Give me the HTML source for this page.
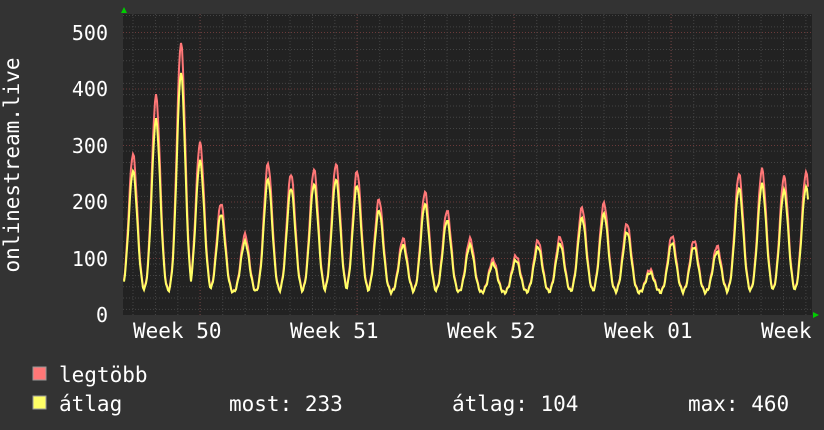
<!DOCTYPE html>
<html><head><style>
body{margin:0;background:#333;width:824px;height:430px;overflow:hidden;font-family:"DejaVu Sans Mono","Liberation Mono",monospace;color:#fff}
svg{position:absolute;left:0;top:0}
</style></head><body>
<svg id="s" width="824" height="430" xmlns="http://www.w3.org/2000/svg" font-family="DejaVu Sans Mono, Liberation Mono, monospace" fill="#fff">
<rect x="123" y="14" width="689" height="301" fill="#222"/>
<g id="grid"></g>
<path id="mx" fill="none" stroke="#f77" stroke-width="2"/>
<path id="av" fill="none" stroke="#ff6" stroke-width="2"/>
<g font-size="20" text-anchor="end">
<text x="108" y="40">500</text><text x="108" y="96">400</text><text x="108" y="153">300</text>
<text x="108" y="209">200</text><text x="108" y="266">100</text><text x="108" y="322">0</text>
</g>
<g font-size="21">
<text x="133" y="338">Week 50</text><text x="290" y="338">Week 51</text><text x="447" y="338">Week 52</text>
<text x="604" y="338">Week 01</text><text x="761" y="338">Week</text>
</g>
<text font-size="21" transform="translate(19,165) rotate(-90)" text-anchor="middle">onlinestream.live</text>
<polygon points="121,13 124,7 127,13" fill="#0c0"/>
<polygon points="813,312 819,315 813,318" fill="#0c0"/>
<rect x="33" y="367" width="13" height="13" fill="#f77" stroke="#999"/>
<rect x="33" y="396" width="13" height="13" fill="#ff6" stroke="#999"/>
<g font-size="21">
<text x="59" y="382">legtöbb</text>
<text x="59" y="411">átlag</text>
<text x="229" y="411">most: 233</text>
<text x="452" y="411">átlag: 104</text>
<text x="688" y="411">max: 460</text>
</g>
</svg>
<script>
var g=document.getElementById("grid"),h="";
for(var v=10;v<=540;v+=20){var y=315-v*0.565;if(y<14)break;h+='<line x1="123" x2="812" y1="'+y+'" y2="'+y+'" stroke="#444" stroke-dasharray="1,2"/>';}
for(var v=100;v<=500;v+=100){var y=315-v*0.565;h+='<line x1="123" x2="812" y1="'+y+'" y2="'+y+'" stroke="#6a3a3a" stroke-dasharray="1,2"/>';}
for(var x=133;x<812;x+=22.43){h+='<line y1="14" y2="315" x1="'+x+'" x2="'+x+'" stroke="#444" stroke-dasharray="1,2"/>';}
for(var x=133+67;x<812;x+=157){h+='<line y1="14" y2="315" x1="'+x+'" x2="'+x+'" stroke="#6a3a3a" stroke-dasharray="1,2"/>';}
g.innerHTML=h;
var pk=[[133,285],[156,388],[181,482],[200,305],[221,198],[245,142],[268,268],[291,250],[314,258],[336,268],[357,255],[379,205],[403,135],[425,218],[447,185],[470,135],[493,98],[516,105],[538,132],[560,138],[582,190],[604,198],[627,162],[650,80],[672,140],[694,132],[717,122],[739,250],[762,258],[784,245],[806,252]];
function val(x){var s=0;for(var i=0;i<pk.length;i++){var d=(x-pk[i][0])/4.2;s=Math.max(s,(pk[i][1]-38)*Math.exp(-d*d/2));}return 38+s+Math.sin(x*1.7)*3;}
var a="",b="";
for(var x=124;x<=808;x++){var m=val(x),v=38+(m-38)*0.88;a+=(x==124?"M":"L")+x+" "+(315-m*0.565).toFixed(1);b+=(x==124?"M":"L")+x+" "+(315-v*0.565).toFixed(1);}
document.getElementById("mx").setAttribute("d",a);
document.getElementById("av").setAttribute("d",b);
</script>
</body></html>
